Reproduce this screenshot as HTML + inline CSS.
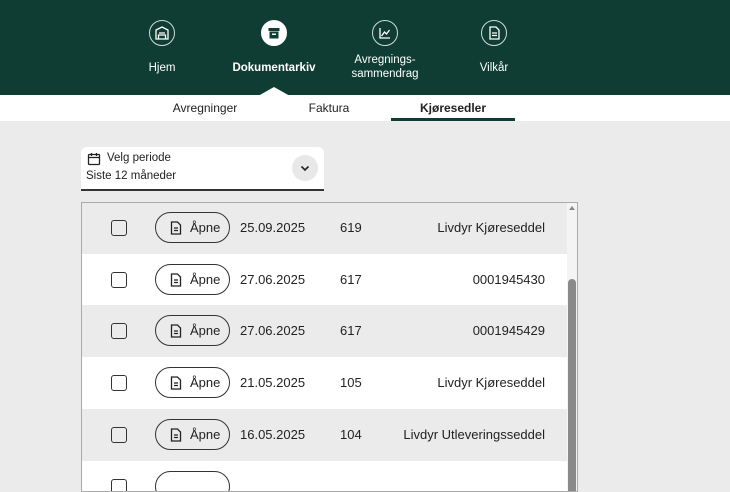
<!DOCTYPE html>
<html><head><meta charset="utf-8"><style>
*{margin:0;padding:0;box-sizing:border-box}
body{width:730px;height:479px;overflow:hidden;background:#ebebeb;font-family:"Liberation Sans",sans-serif;color:#222;position:relative}
.hdr{position:absolute;left:0;top:0;width:730px;height:95px;background:#0f3d33}
.ic{position:absolute;top:20px;width:26px;height:26px;border:1.3px solid #cfdcd7;border-radius:50%}
.ic.act{background:#fff;border-color:#fff}
.lbl{position:absolute;color:#fff;font-size:11.5px;text-align:center;line-height:14px;transform:translateX(-50%);white-space:nowrap}
.notch{position:absolute;left:258px;top:87px;width:0;height:0;border-left:16px solid transparent;border-right:16px solid transparent;border-bottom:9px solid #fff}
.sub{position:absolute;left:0;top:95px;width:730px;height:26px;background:#fff;font-size:12px}
.sub span{position:absolute;top:6px;transform:translateX(-50%)}
.uline{position:absolute;left:391px;top:118px;width:124px;height:3px;background:#0f3d33}
.dd{position:absolute;left:81px;top:147px;width:243px;height:44px;background:#fff;border-bottom:2px solid #333;border-radius:6px 6px 0 0;font-size:11.5px}
.chev{position:absolute;left:292px;top:155px;width:26px;height:26px;border-radius:50%;background:#e8e8e8}
.tbl{position:absolute;left:81px;top:202px;width:497px;height:290px;border:1px solid #aaa;background:#fff;overflow:hidden}
.row{position:absolute;left:0;width:485px;height:52px;font-size:13px}
.row.g{background:#ebebeb}
.cb{position:absolute;left:29px;top:18px;width:16px;height:16px;border:1.5px solid #333;border-radius:3px}
.btn{position:absolute;left:73px;top:10px;width:75px;height:31px;border:1px solid #333;border-radius:16px;font-size:13px}
.btn span{position:absolute;left:34px;top:7px}
.d{position:absolute;left:158px;top:18px}
.n{position:absolute;left:258px;top:18px}
.t{position:absolute;right:22px;top:18px}
.sb{position:absolute;left:485px;top:0;width:11px;height:290px;background:#f4f4f4}
.thumb{position:absolute;left:486px;top:76px;width:8px;height:220px;background:#8a8a8a;border-radius:4px}
</style></head><body>
<div class="hdr">
 <div class="ic" style="left:149px"><svg width="24" height="24" viewBox="0 0 24 24" fill="none" stroke="#fff" stroke-width="1.3"><path d="M6 18V9l6-3 6 3v9zM9 12h6M8.5 14h7v4h-7z"/></svg></div>
 <div class="ic act" style="left:261px"><svg width="24" height="24" viewBox="0 0 24 24"><rect x="6.5" y="7" width="11" height="3" fill="#0f3d33"/><rect x="7.5" y="10.5" width="9" height="7" fill="#0f3d33"/><rect x="10" y="12.5" width="4" height="1.5" fill="#fff"/></svg></div>
 <div class="ic" style="left:372px"><svg width="24" height="24" viewBox="0 0 24 24" fill="none" stroke="#fff" stroke-width="1.3"><path d="M7 7v10h10M8.5 15l3-4 2 2 3-4"/></svg></div>
 <div class="ic" style="left:481px"><svg width="24" height="24" viewBox="0 0 24 24" fill="none" stroke="#fff" stroke-width="1.3"><path d="M8 6h6l3 3v9H8zM10 12h5M10 14.5h5"/></svg></div>
 <div class="lbl" style="left:162px;top:61px">Hjem</div>
 <div class="lbl" style="left:274px;top:61px;font-weight:bold">Dokumentarkiv</div>
 <div class="lbl" style="left:385px;top:53px">Avregnings-<br>sammendrag</div>
 <div class="lbl" style="left:494px;top:61px">Vilkår</div>
 <div class="notch"></div>
</div>
<div class="sub"><span style="left:205px">Avregninger</span><span style="left:329px">Faktura</span><span style="left:453px;font-weight:bold">Kjøresedler</span></div>
<div class="uline"></div>
<div class="dd">
 <svg style="position:absolute;left:6px;top:5px" width="14" height="14" viewBox="0 0 14 14" fill="none" stroke="#222" stroke-width="1.3"><rect x="1.5" y="2.5" width="11" height="10" rx="1"/><path d="M1.5 5.5h11M4.5 1v3M9.5 1v3"/></svg>
 <span style="position:absolute;left:26px;top:5px">Velg periode</span>
 <span style="position:absolute;left:5px;top:23px">Siste 12 måneder</span>
</div>
<div class="chev"><svg width="26" height="26" viewBox="0 0 26 26" fill="none" stroke="#222" stroke-width="1.6"><path d="M9.5 11.5l3.5 3.5 3.5-3.5"/></svg></div>
<div class="tbl">
 <div class="sb"></div><div class="thumb"></div>
 <div style="position:absolute;left:487px;top:3px;border-left:3px solid transparent;border-right:3px solid transparent;border-bottom:4px solid #888"></div>
 <div class="row g" style="top:-1px"><div class="cb"></div><div class="btn"><svg style="position:absolute;left:14px;top:8px" width="12" height="14" viewBox="0 0 12 14" fill="none" stroke="#222" stroke-width="1.3"><path d="M1.5 1h6l3 3v9h-9zM4 7h4M4 9.5h4"/></svg><span>Åpne</span></div><div class="d">25.09.2025</div><div class="n">619</div><div class="t">Livdyr Kjøreseddel</div></div>
 <div class="row" style="top:51px"><div class="cb"></div><div class="btn"><svg style="position:absolute;left:14px;top:8px" width="12" height="14" viewBox="0 0 12 14" fill="none" stroke="#222" stroke-width="1.3"><path d="M1.5 1h6l3 3v9h-9zM4 7h4M4 9.5h4"/></svg><span>Åpne</span></div><div class="d">27.06.2025</div><div class="n">617</div><div class="t">0001945430</div></div>
 <div class="row g" style="top:102px"><div class="cb"></div><div class="btn"><svg style="position:absolute;left:14px;top:8px" width="12" height="14" viewBox="0 0 12 14" fill="none" stroke="#222" stroke-width="1.3"><path d="M1.5 1h6l3 3v9h-9zM4 7h4M4 9.5h4"/></svg><span>Åpne</span></div><div class="d">27.06.2025</div><div class="n">617</div><div class="t">0001945429</div></div>
 <div class="row" style="top:154px"><div class="cb"></div><div class="btn"><svg style="position:absolute;left:14px;top:8px" width="12" height="14" viewBox="0 0 12 14" fill="none" stroke="#222" stroke-width="1.3"><path d="M1.5 1h6l3 3v9h-9zM4 7h4M4 9.5h4"/></svg><span>Åpne</span></div><div class="d">21.05.2025</div><div class="n">105</div><div class="t">Livdyr Kjøreseddel</div></div>
 <div class="row g" style="top:206px"><div class="cb"></div><div class="btn"><svg style="position:absolute;left:14px;top:8px" width="12" height="14" viewBox="0 0 12 14" fill="none" stroke="#222" stroke-width="1.3"><path d="M1.5 1h6l3 3v9h-9zM4 7h4M4 9.5h4"/></svg><span>Åpne</span></div><div class="d">16.05.2025</div><div class="n">104</div><div class="t">Livdyr Utleveringsseddel</div></div>
 <div class="row" style="top:258px"><div class="cb"></div><div class="btn"></div></div>
</div>
</body></html>
